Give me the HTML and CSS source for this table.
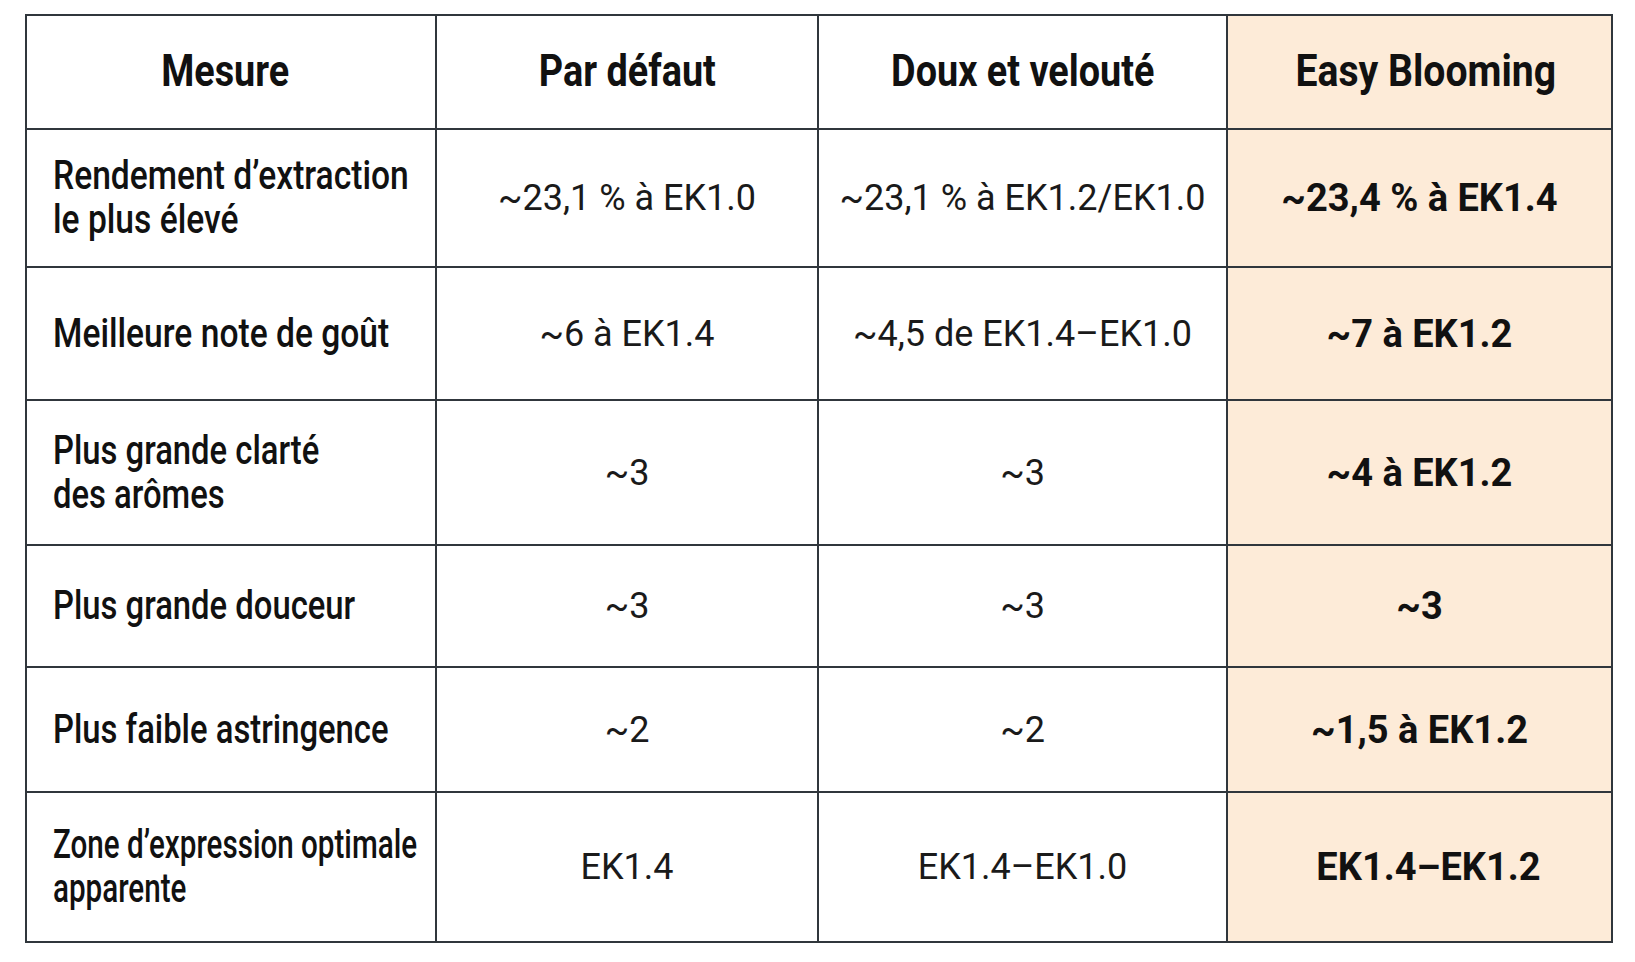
FILE: index.html
```html
<!DOCTYPE html>
<html lang="fr">
<head>
<meta charset="utf-8">
<title>Comparaison</title>
<link rel="stylesheet" href="styles.css">
</head>
<body>
<table class="cmp">
  <colgroup>
    <col class="c1"><col class="c2"><col class="c3"><col class="c4">
  </colgroup>
  <thead>
    <tr class="r0">
      <th class="head first"><span class="narrow">Mesure</span></th>
      <th class="head"><span class="narrow">Par défaut</span></th>
      <th class="head"><span class="narrow">Doux et velouté</span></th>
      <th class="head hl last"><span class="narrow broad">Easy Blooming</span></th>
    </tr>
  </thead>
  <tbody>
    <tr class="r1">
      <td class="label"><span class="lnarrow wide">Rendement d’extraction<br>le plus élevé</span></td>
      <td class="val">~23,1 % à EK1.0</td>
      <td class="val">~23,1 % à EK1.2/EK1.0</td>
      <td class="val hl strong">~23,4 % à EK1.4</td>
    </tr>
    <tr class="r2">
      <td class="label"><span class="lnarrow wide">Meilleure note de goût</span></td>
      <td class="val">~6 à EK1.4</td>
      <td class="val">~4,5 de EK1.4–EK1.0</td>
      <td class="val hl strong">~7 à EK1.2</td>
    </tr>
    <tr class="r3">
      <td class="label"><span class="lnarrow">Plus grande clarté<br>des arômes</span></td>
      <td class="val">~3</td>
      <td class="val">~3</td>
      <td class="val hl strong">~4 à EK1.2</td>
    </tr>
    <tr class="r4">
      <td class="label"><span class="lnarrow">Plus grande douceur</span></td>
      <td class="val">~3</td>
      <td class="val">~3</td>
      <td class="val hl strong">~3</td>
    </tr>
    <tr class="r5">
      <td class="label"><span class="lnarrow">Plus faible astringence</span></td>
      <td class="val">~2</td>
      <td class="val">~2</td>
      <td class="val hl strong">~1,5 à EK1.2</td>
    </tr>
    <tr class="r6">
      <td class="label"><span class="lnarrow tight">Zone d’expression optimale<br>apparente</span></td>
      <td class="val">EK1.4</td>
      <td class="val">EK1.4–EK1.0</td>
      <td class="val hl strong shift">EK1.4–EK1.2</td>
    </tr>
  </tbody>
</table>
</body>
</html>
```
FILE: styles.css
```css
html, body {
  margin: 0;
  padding: 0;
  background: #ffffff;
}

body {
  padding: 14px 0 0 25px;
  font-family: Roboto, "Liberation Sans", sans-serif;
  color: #141414;
}

.cmp {
  border-collapse: collapse;
  table-layout: fixed;
  width: 1586px;
  border: 2px solid #30363c;
}

.c1 { width: 410px; }
.c2 { width: 382px; }
.c3 { width: 409px; }
.c4 { width: 385px; }

.cmp th,
.cmp td {
  border: 2px solid #30363c;
  padding: 0;
  vertical-align: middle;
  white-space: nowrap;
  overflow: visible;
}

.r0 { height: 114px; }
.r1 { height: 138px; }
.r2 { height: 133px; }
.r3 { height: 145px; }
.r4 { height: 122px; }
.r5 { height: 125px; }
.r6 { height: 150px; }

.cmp .head {
  font-family: Roboto, "Liberation Sans", sans-serif;
  font-weight: 700;
  font-size: 45px;
  line-height: 50px;
  padding-bottom: 3px;
  text-align: center;
  color: #111111;
}

.cmp .head.first {
  padding-right: 12px;
}

.cmp .head.last {
  padding-left: 12px;
}

.narrow {
  display: inline-block;
  transform: scaleX(0.84);
  transform-origin: center center;
}

.narrow.broad {
  transform: scaleX(0.87);
}

.cmp .label {
  font-family: Roboto, "Liberation Sans", sans-serif;
  font-weight: 500;
  font-size: 40px;
  line-height: 44px;
  text-align: left;
  padding-left: 26px;
  color: #111111;
}

.lnarrow {
  display: inline-block;
  transform: scaleX(0.82);
  transform-origin: left center;
}

.lnarrow.wide {
  transform: scaleX(0.84);
}

.lnarrow.tight {
  transform: scaleX(0.74);
}

.cmp .val {
  font-family: Roboto, "Liberation Sans", sans-serif;
  font-size: 36px;
  font-weight: 400;
  text-align: center;
  color: #1a1a1a;
}

.cmp .strong {
  font-weight: 700;
  font-size: 38px;
  color: #111111;
}

.cmp .shift {
  padding-left: 18px;
}

.hl {
  background: #fdebd8;
}
```
